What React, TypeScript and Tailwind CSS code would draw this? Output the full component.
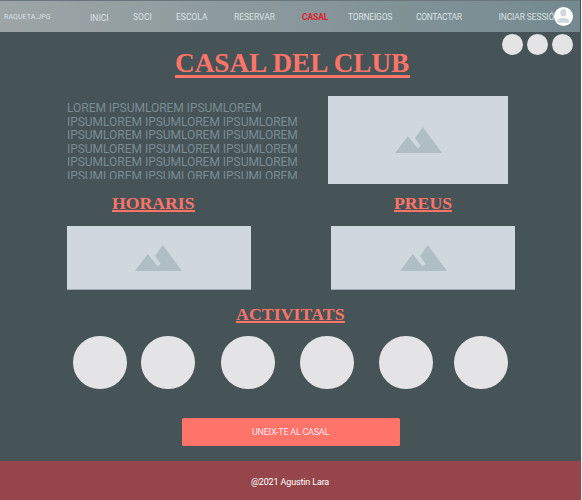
import React from "react";

const navItems = [
  { label: "INICI", box: "ml-[38.5px] w-[43px] pt-px" },
  { label: "SOCI", box: "w-[43px]" },
  { label: "ESCOLA", box: "w-[58px]" },
  { label: "RESERVAR", box: "w-[68px]" },
  { label: "CASAL", box: "w-[46px] font-bold text-[#e01f2d] tracking-[-0.1px]" },
  { label: "TORNEIGOS", box: "w-[68px] tracking-[-0.2px]" },
  { label: "CONTACTAR", box: "w-[82.5px] tracking-[-0.3px]" },
  { label: "INCIAR SESSIÓ", box: "w-[55.5px] tracking-[-0.12px]" },
];

const activities = [
  "ml-[73px]",
  "ml-[14px]",
  "ml-[26px]",
  "ml-[25px]",
  "ml-[24.5px]",
  "ml-[21.5px]",
];

function Mountains({ className }: { className: string }) {
  return (
    <svg viewBox="0 0 47 26" className={`h-[26px] w-[47px] shrink-0 ${className}`} fill="#afbdc4">
      <path d="M0 26 L12.8 9 L22.7 21.5 L25.7 19 L20 11 L27.8 0 L47 26 Z" />
    </svg>
  );
}

function Heading({ children, className }: { children: string; className: string }) {
  return (
    <h2
      className={`h-[17px] border-b-2 border-[#ff7468] font-['Liberation_Serif',serif] text-[17.7px] font-bold leading-[17px] whitespace-nowrap text-[#ff7468] ${className}`}
    >
      {children}
    </h2>
  );
}

export default function App() {
  return (
    <div className="h-[500px] w-[582px] overflow-hidden bg-[#f4f5f5] font-['Roboto',sans-serif]">
      <div className="flex h-[500px] w-[581px] flex-col overflow-hidden bg-[#465357]">
        <header className="flex h-[32px] w-[580px] shrink-0 items-start border-t border-[#69777c] bg-linear-to-r from-[#9da5a6] to-[#748a90] text-[8.5px] leading-[10px] whitespace-nowrap text-[#d8e1e4]">
          <span className="mt-[10.5px] ml-[4px] w-[47.5px] text-[7px] tracking-[0.1px]">RAQUETA.JPG</span>
          {navItems.map((item) => (
            <span key={item.label} className={`mt-[11px] shrink-0 ${item.box}`}>
              {item.label}
            </span>
          ))}
          <svg viewBox="0 0 19 19" className="mt-[6px] h-[19px] w-[19px] shrink-0">
            <circle cx="9.5" cy="9.5" r="9.5" fill="#fff" />
            <ellipse cx="9.3" cy="5.8" rx="3" ry="3.8" fill="#cfd8de" />
            <path d="M3.4 15.8 V14 C3.4 12 6.2 11.1 9.3 11.1 S15.3 12 15.3 14 V15.8 Z" fill="#cfd8de" />
          </svg>
        </header>

        <div className="flex h-[64px] shrink-0 items-start">
          <h1 className="mt-[16px] ml-[175px] h-[30px] w-[235px] border-b-3 border-[#ff7468] font-['Liberation_Serif',serif] text-[27.2px] leading-[31px] font-bold whitespace-nowrap text-[#ff7468]">
            CASAL DEL CLUB
          </h1>
          <div className="mt-[2px] ml-[92px] flex gap-[4px]">
            <span className="h-[21px] w-[21px] rounded-full bg-[#e4e4e6]" />
            <span className="h-[21px] w-[21px] rounded-full bg-[#e4e4e6]" />
            <span className="h-[21px] w-[21px] rounded-full bg-[#e4e4e6]" />
          </div>
        </div>

        <section className="flex h-[98px] shrink-0 items-start">
          <p className="mt-[5px] ml-[67px] h-[78px] w-[240px] overflow-hidden pt-px text-[12px] leading-[13.5px] tracking-[-0.03px] whitespace-nowrap text-[#7a8d93]">
            LOREM IPSUMLOREM IPSUMLOREM
            <br />
            IPSUMLOREM IPSUMLOREM IPSUMLOREM
            <br />
            IPSUMLOREM IPSUMLOREM IPSUMLOREM
            <br />
            IPSUMLOREM IPSUMLOREM IPSUMLOREM
            <br />
            IPSUMLOREM IPSUMLOREM IPSUMLOREM
            <br />
            IPSUMLOREM IPSUMLOREM IPSUMLOREM
          </p>
          <div className="ml-[21px] h-[88px] w-[180px] bg-[#d0d8df]">
            <Mountains className="mt-[31px] ml-[66.5px]" />
          </div>
        </section>

        <div className="flex h-[32px] shrink-0 items-start pt-px">
          <Heading className="ml-[112px] w-[83px]">HORARIS</Heading>
          <Heading className="ml-[199px] w-[58px]">PREUS</Heading>
        </div>

        <div className="flex h-[79px] shrink-0 items-start">
          <div className="ml-[67px] h-[64px] w-[184px] border-b border-[#9eaab0] bg-[#d0d8df]">
            <Mountains className="mt-[19px] ml-[68px]" />
          </div>
          <div className="ml-[80px] h-[64px] w-[184px] border-b border-[#9eaab0] bg-[#d0d8df]">
            <Mountains className="mt-[19px] ml-[69px]" />
          </div>
        </div>

        <div className="flex h-[31px] shrink-0 items-start pt-px">
          <Heading className="ml-[236px] w-[109px] tracking-[0.12px]">ACTIVITATS</Heading>
        </div>

        <div className="flex h-[82px] shrink-0 items-start">
          {activities.map((margin, i) => (
            <span key={i} className={`h-[53px] w-[54px] shrink-0 rounded-full bg-[#e4e4e6] ${margin}`} />
          ))}
        </div>

        <button className="ml-[182px] flex h-[28px] w-[218px] shrink-0 items-center justify-center rounded-[1.5px] bg-[#ff7468] pt-px pr-px text-[9px] tracking-[-0.25px] whitespace-nowrap text-[#ffe1ee]">
          UNEIX-TE AL CASAL
        </button>

        <footer className="mt-[15px] flex h-[39px] shrink-0 items-center justify-center bg-[#96464b] pt-[4px] pr-px text-[9px] tracking-[-0.15px] whitespace-nowrap text-white">
          @2021 Agustin Lara
        </footer>
      </div>
    </div>
  );
}
